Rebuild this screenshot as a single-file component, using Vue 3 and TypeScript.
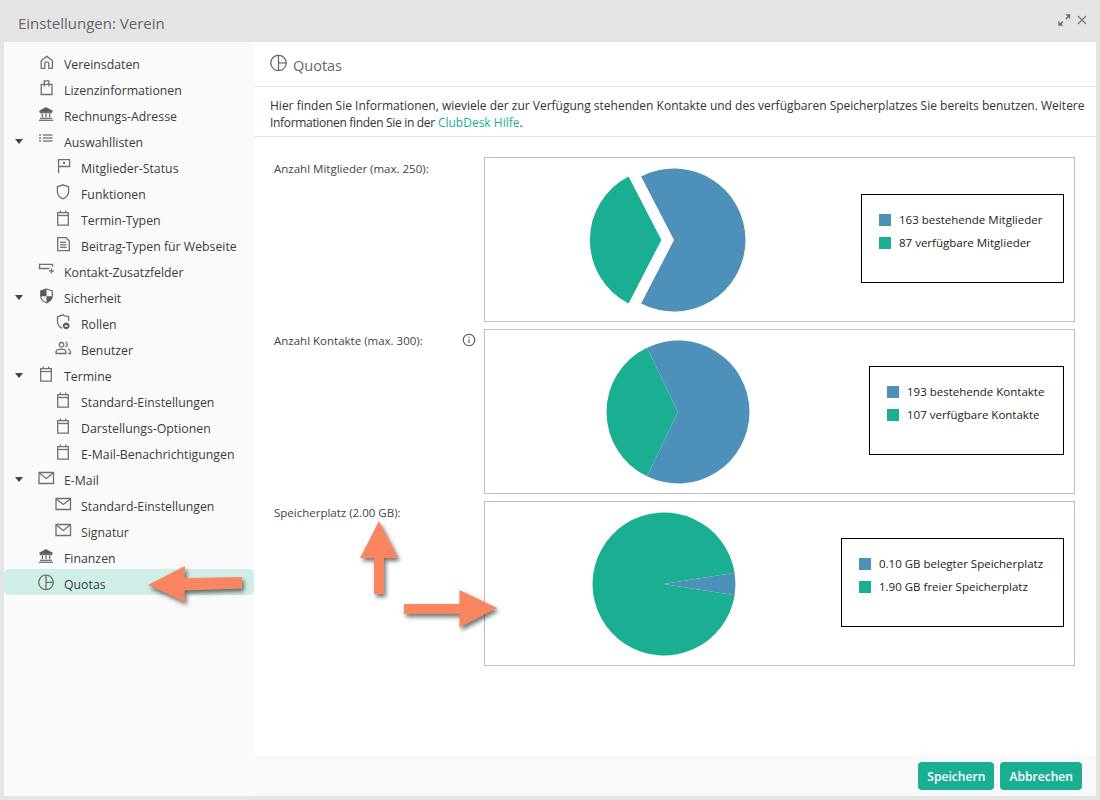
<script setup lang="ts">
interface NavItem { label: string; icon: string; level: 0 | 1; open?: boolean; active?: boolean }
interface Slice { label: string; value: number; color: string }
interface Quota { title: string; info?: boolean; legendWidth: number; slices: [Slice, Slice]; gap: number }

const BLUE = '#4d91bb'
const GREEN = '#1aaf93'

const SHIELD = 'M8.500 1 14.300 3v5c0 3-2.300 5.500-5.800 7-3.500-1.500-5.800-4-5.800-7V3z'

const icons: Record<string, string[]> = {
  home: ['M3.200 14.300V7.400c0-.6.2-1 .7-1.400L8.800 2.400l4.900 3.600c.5.400.7.800.7 1.400v6.900h-3.600V9.800a2 2 0 0 0-4 0v4.500z'],
  bag: ['M3.200 4.300h10.800v10.200H3.200z', 'M6.300 6.500V.8h4.600v5.700'],
  bank: ['M1.500 5.300 8 1.800l6.500 3.500z', 'M1 14.300h14', 'M2 12.300h12', 'M4.300 7.500v3.500', 'M8 7.500v3.500', 'M11.700 7.500v3.500', 'M1.800 6.600h12.400'],
  list: ['M1 3h2.200', 'M5 3h9.500', 'M1 6h2.200', 'M5 6h9.500', 'M1 9h2.200', 'M5 9h9.500'],
  flag: ['M3.600 1v14', 'M3.600 1.700h11v6.800h-11', 'M9 4v1.800'],
  shield: ['M8 .8 13.600 2.800v5c0 3-2.200 5.500-5.600 7-3.400-1.500-5.600-4-5.600-7v-5z'],
  shieldHalf: [SHIELD],
  role: ['M10.500 2.500 8 .8 2.500 2.800v5c0 2.900 1.900 5.200 4.600 6.600', 'M13.600 7V2.800L11 1.900'],
  users: ['M6.500 2.500a2.300 2.300 0 1 0 .01 0z', 'M1 13.500v-1.300c0-1.900 2.300-3 5-3s5 1.100 5 3v1.300z', 'M10.500 2.200c2.300.5 2.300 4.100 0 4.600', 'M13 9c1.400.5 2.400 1.300 2.400 2.700v1.800h-2'],
  calendar: ['M2.700 2.700h10.600v12.500H2.700z', 'M2.700 5.500h10.600', 'M5.300 .5v2.500', 'M10.700 .5v2.500'],
  doc: ['M2.700 1.700h8.300l3.300 3.300v9.700H2.700z', 'M5 6.300h6', 'M5 8.800h6.500', 'M5 11.300h6.500'],
  field: ['M11.500 6.500H1.500V2.300h13v2.500', 'M13.500 6.500v5', 'M11 9h5'],
  mail: ['M1 2.500h14.500v11H1z', 'M1.300 3 8.250 8.500 15.200 3'],
  pie: ['M8 1.200a7.200 7.200 0 1 0 .01 0z', 'M8 1.200v14.400', 'M8 8.400h7.200'],
}

const iconFills: Record<string, string[]> = {
  shieldHalf: ['M8.500 1 2.700 3v5.200h5.800z', 'M8.500 8.200h5.800c-.3 3-2.600 5.400-5.800 6.800z'],
  role: ['M11.200 8.500a3.400 3.400 0 1 0 .01 0zM9.700 11.200h3v1.500h-3z'],
  bank: ['M1.500 5.300 8 1.800l6.500 3.500z'],
  flag: ['M8.300 3.800h1.400v2h-1.400z'],
}

const nav: NavItem[] = [
  { label: 'Vereinsdaten', icon: 'home', level: 0 },
  { label: 'Lizenzinformationen', icon: 'bag', level: 0 },
  { label: 'Rechnungs-Adresse', icon: 'bank', level: 0 },
  { label: 'Auswahllisten', icon: 'list', level: 0, open: true },
  { label: 'Mitglieder-Status', icon: 'flag', level: 1 },
  { label: 'Funktionen', icon: 'shield', level: 1 },
  { label: 'Termin-Typen', icon: 'calendar', level: 1 },
  { label: 'Beitrag-Typen für Webseite', icon: 'doc', level: 1 },
  { label: 'Kontakt-Zusatzfelder', icon: 'field', level: 0 },
  { label: 'Sicherheit', icon: 'shieldHalf', level: 0, open: true },
  { label: 'Rollen', icon: 'role', level: 1 },
  { label: 'Benutzer', icon: 'users', level: 1 },
  { label: 'Termine', icon: 'calendar', level: 0, open: true },
  { label: 'Standard-Einstellungen', icon: 'calendar', level: 1 },
  { label: 'Darstellungs-Optionen', icon: 'calendar', level: 1 },
  { label: 'E-Mail-Benachrichtigungen', icon: 'calendar', level: 1 },
  { label: 'E-Mail', icon: 'mail', level: 0, open: true },
  { label: 'Standard-Einstellungen', icon: 'mail', level: 1 },
  { label: 'Signatur', icon: 'mail', level: 1 },
  { label: 'Finanzen', icon: 'bank', level: 0 },
  { label: 'Quotas', icon: 'pie', level: 0, active: true },
]

const quotas: Quota[] = [
  {
    title: 'Anzahl Mitglieder (max. 250):', legendWidth: 203, gap: 12.6,
    slices: [
      { label: '163 bestehende Mitglieder', value: 163, color: BLUE },
      { label: '87 verfügbare Mitglieder', value: 87, color: GREEN },
    ],
  },
  {
    title: 'Anzahl Kontakte (max. 300):', legendWidth: 195, gap: 0, info: true,
    slices: [
      { label: '193 bestehende Kontakte', value: 193, color: BLUE },
      { label: '107 verfügbare Kontakte', value: 107, color: GREEN },
    ],
  },
  {
    title: 'Speicherplatz (2.00 GB):', legendWidth: 223, gap: 0,
    slices: [
      { label: '0.10 GB belegter Speicherplatz', value: 0.1, color: BLUE },
      { label: '1.90 GB freier Speicherplatz', value: 1.9, color: GREEN },
    ],
  },
]

function slicePath(q: Quota, index: 0 | 1): string {
  const r = 71.5
  const total = q.slices[0].value + q.slices[1].value
  const half = (q.slices[0].value / total) * Math.PI
  const cx = index === 0 ? 80 : 80 - q.gap
  const cy = 75
  const x = cx + r * Math.cos(half)
  const dy = r * Math.sin(half)
  const sweepLarge = (index === 0 ? half * 2 : 2 * Math.PI - half * 2) > Math.PI ? 1 : 0
  return index === 0
    ? `M${cx} ${cy}L${x} ${cy - dy}A${r} ${r} 0 ${sweepLarge} 1 ${x} ${cy + dy}Z`
    : `M${cx} ${cy}L${x} ${cy + dy}A${r} ${r} 0 ${sweepLarge} 1 ${x} ${cy - dy}Z`
}
</script>

<template>
  <div class="window">
    <header class="titlebar">
      <span class="title">Einstellungen: Verein</span>
      <span class="win-actions">
        <svg class="win-icon" viewBox="0 0 16 16">
          <path class="fill" d="M9.500 1.500H15V7l-1.900-1.900-2.300 2.300-1.200-1.200 2.300-2.300z" />
          <path class="fill" d="M1.500 9V14.500H7L5.100 12.600l2.300-2.300-1.200-1.200-2.300 2.300z" />
        </svg>
        <svg class="win-close" viewBox="0 0 10 10"><path d="M1 1l8 8M9 1l-8 8" /></svg>
      </span>
    </header>

    <div class="body">
      <nav class="sidebar">
        <div
          v-for="(item, i) in nav"
          :key="i"
          class="nav-row"
          :class="{ sub: item.level === 1, active: item.active }"
        >
          <span class="caret" :class="{ on: item.open }"></span>
          <svg class="nav-icon" viewBox="0 0 16 16">
            <path v-for="(d, j) in icons[item.icon]" :key="j" :d="d" />
            <path v-for="(d, j) in iconFills[item.icon] || []" :key="'f' + j" :d="d" class="solid" />
          </svg>
          <span class="nav-label">{{ item.label }}</span>
        </div>
      </nav>

      <main class="main">
        <div class="content">
          <div class="page-head">
            <svg class="head-icon" viewBox="0 0 16 16">
              <path v-for="(d, j) in icons.pie" :key="j" :d="d" />
            </svg>
            <span>Quotas</span>
          </div>
          <p class="intro">
            Hier finden Sie Informationen, wieviele der zur Verfügung stehenden Kontakte und des verfügbaren Speicherplatzes Sie bereits benutzen. Weitere <span class="tight">Informationen finden Sie in der</span> <a class="link">ClubDesk Hilfe</a>.
          </p>
          <div class="quotas">
            <section v-for="q in quotas" :key="q.title" class="quota">
              <div class="quota-label">
                <span>{{ q.title }}</span>
                <svg v-if="q.info" class="info" viewBox="0 0 14 14">
                  <circle cx="7" cy="7" r="5.700" />
                  <path d="M7 6.300v3.600M7 3.800v1.200" />
                </svg>
              </div>
              <div class="quota-box">
                <div class="chart">
                  <svg class="pie" viewBox="0 0 160 150">
                    <path :d="slicePath(q, 1)" :fill="q.slices[1].color" />
                    <path :d="slicePath(q, 0)" :fill="q.slices[0].color" />
                  </svg>
                </div>
                <div class="legend" :style="{ width: q.legendWidth + 'px' }">
                  <div v-for="s in q.slices" :key="s.label" class="legend-row">
                    <span class="swatch" :style="{ background: s.color }"></span>
                    <span>{{ s.label }}</span>
                  </div>
                </div>
              </div>
            </section>
          </div>
        </div>
        <footer class="footer">
          <button class="btn">Speichern</button>
          <button class="btn">Abbrechen</button>
        </footer>
      </main>
    </div>

    <svg class="arrows" viewBox="0 0 1100 800">
      <polygon points="148,585 185,566 184.500,578.300 242,577 242,588.500 184.500,590.500 185,602" />
      <polygon points="379,521 398,558 384,558 384,594 374,594 374,558 360,558" />
      <polygon points="497,608 459.500,590 459.500,604 404,604 404,614 459.500,614 459.500,627.500" />
    </svg>
  </div>
</template>

<style>
html, body { margin: 0; background: #e4e4e4; }
</style>

<style scoped>
.window {
  position: relative;
  width: 1100px;
  height: 800px;
  box-sizing: border-box;
  padding: 0 4px 4px;
  display: flex;
  flex-direction: column;
  background: #e4e4e4;
  font-family: "Open Sans", "Noto Sans", sans-serif;
  font-size: 12px;
  color: #333;
  overflow: hidden;
}
.titlebar {
  height: 42px;
  flex: none;
  display: flex;
  align-items: center;
  justify-content: space-between;
  padding: 4px 9px 0 14px;
  box-sizing: border-box;
}
.title { font-size: 15px; color: #666; }
.win-actions { display: flex; align-items: center; gap: 6px; margin-top: -7px; }
.win-icon { width: 14px; height: 14px; }
.win-icon .fill { fill: #707070; }
.win-close { width: 10px; height: 10px; }
.win-close path { stroke: #777; stroke-width: 1.2; fill: none; }

.body { flex: 1; display: flex; min-height: 0; }
.sidebar {
  width: 250px;
  flex: none;
  box-sizing: border-box;
  padding-top: 7px;
  background: #fafafa;
}
.nav-row {
  height: 26px;
  display: flex;
  align-items: center;
  padding-left: 11px;
  border-radius: 5px;
  white-space: nowrap;
}
.nav-row.active { background: #cfeee8; }
.caret {
  width: 8px;
  height: 5px;
  flex: none;
  margin-right: 15px;
  margin-top: 2px;
}
.caret.on {
  box-sizing: border-box;
  width: 0;
  height: 0;
  border-style: solid;
  border-width: 5px 4px 0;
  border-color: #444 transparent transparent;
}
.nav-row.sub .caret { margin-left: 17px; }
.nav-icon {
  width: 16px;
  height: 16px;
  flex: none;
  overflow: visible;
  fill: none;
  stroke: #707070;
  stroke-width: 1.300;
}
.nav-icon .solid { fill: #5a5a5a; stroke: none; fill-rule: evenodd; }
.nav-label { margin: 4px 0 0 10px; font-size: 12.300px; color: #3c3c3c; }

.main { flex: 1; min-width: 0; display: flex; flex-direction: column; background: #fff; }
.content { flex: 1; min-height: 0; }
.page-head {
  height: 45px;
  box-sizing: border-box;
  display: flex;
  align-items: center;
  gap: 6px;
  padding: 3px 0 0 16px;
  border-bottom: 1px solid #e1e1e1;
  font-size: 14.500px;
  color: #666;
}
.head-icon {
  width: 17px;
  height: 17px;
  margin-top: -6px;
  fill: none;
  stroke: #666;
  stroke-width: 1.150;
}
.intro {
  margin: 0;
  height: 50px;
  box-sizing: border-box;
  padding: 10px 8px 0 16px;
  border-bottom: 1px solid #e1e1e1;
  line-height: 17px;
  color: #333;
}
.tight { letter-spacing: -0.32px; }
.link { color: #1aaf93; }
.quotas {
  padding: 20px 21px 0 16px;
  display: flex;
  flex-direction: column;
  gap: 7px;
}
.quota { display: flex; height: 165px; font-size: 11.500px; }
.quota-label {
  width: 214px;
  flex: none;
  box-sizing: border-box;
  padding: 4px 8px 0 4px;
  display: flex;
  justify-content: space-between;
  align-items: flex-start;
  color: #444;
}
.info {
  width: 14px;
  height: 14px;
  fill: none;
  stroke: #555;
  stroke-width: 1.100;
}
.quota-box {
  flex: 1;
  display: flex;
  align-items: center;
  border: 1px solid #b9bdd0;
  padding-right: 10px;
}
.chart { flex: 1; display: flex; justify-content: center; align-items: center; padding-left: 2px; }
.pie { width: 160px; height: 150px; display: block; overflow: visible; }
.legend {
  box-sizing: border-box;
  height: 89px;
  flex: none;
  margin-bottom: 2px;
  border: 1px solid #000;
  background: #fff;
  padding: 15px 0 0 17px;
  display: flex;
  flex-direction: column;
  gap: 4px;
  color: #222;
}
.legend-row {
  display: flex;
  align-items: center;
  gap: 8px;
  height: 19px;
  white-space: nowrap;
}
.swatch { width: 12px; height: 12px; flex: none; }

.footer {
  height: 40px;
  flex: none;
  box-sizing: border-box;
  background: #f9f9f9;
  display: flex;
  justify-content: flex-end;
  align-items: flex-start;
  gap: 6px;
  padding: 6px 14px 0 0;
}
.btn {
  height: 28px;
  padding: 0 9px;
  border: none;
  border-radius: 4px;
  background: #1aaf93;
  color: #fff;
  font: 600 12.100px "Open Sans", "Noto Sans", sans-serif;
}
.arrows {
  position: absolute;
  left: 0;
  top: 0;
  width: 1100px;
  height: 800px;
  pointer-events: none;
  filter: drop-shadow(2px 3px 2px rgba(0, 0, 0, 0.55));
}
.arrows polygon { fill: #f98660; }
</style>
